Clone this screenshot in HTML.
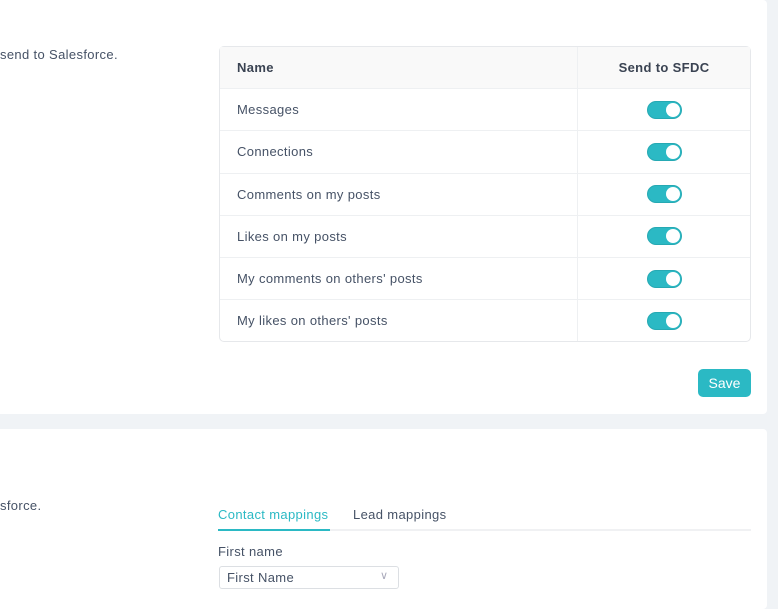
<!DOCTYPE html>
<html><head><style>
body{margin:0;width:778px;height:600px;background:#f0f3f6;font-family:"Liberation Sans",sans-serif;color:#465266;position:relative;overflow:hidden;letter-spacing:0.35px}
.card{position:absolute;background:#fff;left:0;width:767px;border-radius:0 4px 4px 0}
.t{position:absolute;font-size:13px;white-space:nowrap}
table{position:absolute;left:219px;top:46px;width:532px;border-collapse:separate;border-spacing:0;border:1px solid #e6e8eb;border-radius:5px;font-size:13px}
td,th{height:41.2px;border-bottom:1px solid #eef0f2;padding:0 0 0 17px;text-align:left}
tr:last-child td{border-bottom:none}
th{background:#f9f9f9;font-weight:bold;color:#3a4352}
td:nth-child(2),th:nth-child(2){border-left:1px solid #eef0f2;text-align:center;padding:0;width:172px}
.tg{display:inline-block;width:33px;height:16px;border-radius:9px;background:#2bb9c4;position:relative;vertical-align:middle;border:1px solid #26a9b3}
.tg:after{content:"";position:absolute;right:1px;top:1px;width:14px;height:14px;border-radius:50%;background:#fff}
</style></head><body>
<div class="card" style="top:0;height:414px">
<div class="t" style="left:0;top:47px">send to Salesforce.</div>
<table>
<tr><th>Name</th><th>Send to SFDC</th></tr>
<tr><td>Messages</td><td><span class="tg"></span></td></tr>
<tr><td>Connections</td><td><span class="tg"></span></td></tr>
<tr><td>Comments on my posts</td><td><span class="tg"></span></td></tr>
<tr><td>Likes on my posts</td><td><span class="tg"></span></td></tr>
<tr><td>My comments on others' posts</td><td><span class="tg"></span></td></tr>
<tr><td>My likes on others' posts</td><td><span class="tg"></span></td></tr>
</table>
<div style="position:absolute;left:698px;top:369px;width:53px;height:28px;background:#2bb9c4;border-radius:5px;color:#fff;font-size:14px;line-height:29px;text-align:center;letter-spacing:0">Save</div>
</div>
<div class="card" style="top:429px;height:180px">
<div class="t" style="left:0;top:69px">sforce.</div>
<div class="t" style="left:218px;top:78px;color:#2bb9c4">Contact mappings</div>
<div class="t" style="left:353px;top:78px">Lead mappings</div>
<div style="position:absolute;left:218px;top:100px;width:533px;height:2px;background:#f0f1f3"></div>
<div style="position:absolute;left:218px;top:100px;width:112px;height:2px;background:#2bb9c4"></div>
<div class="t" style="left:218px;top:115px">First name</div>
<div style="position:absolute;left:219px;top:137px;width:178px;height:21px;border:1px solid #dcdfe3;border-radius:3px"></div>
<div class="t" style="left:227px;top:141px">First Name</div>
<div class="t" style="left:380px;top:140px;color:#aab;font-size:11px">&#8744;</div>
</div>
</body></html>
